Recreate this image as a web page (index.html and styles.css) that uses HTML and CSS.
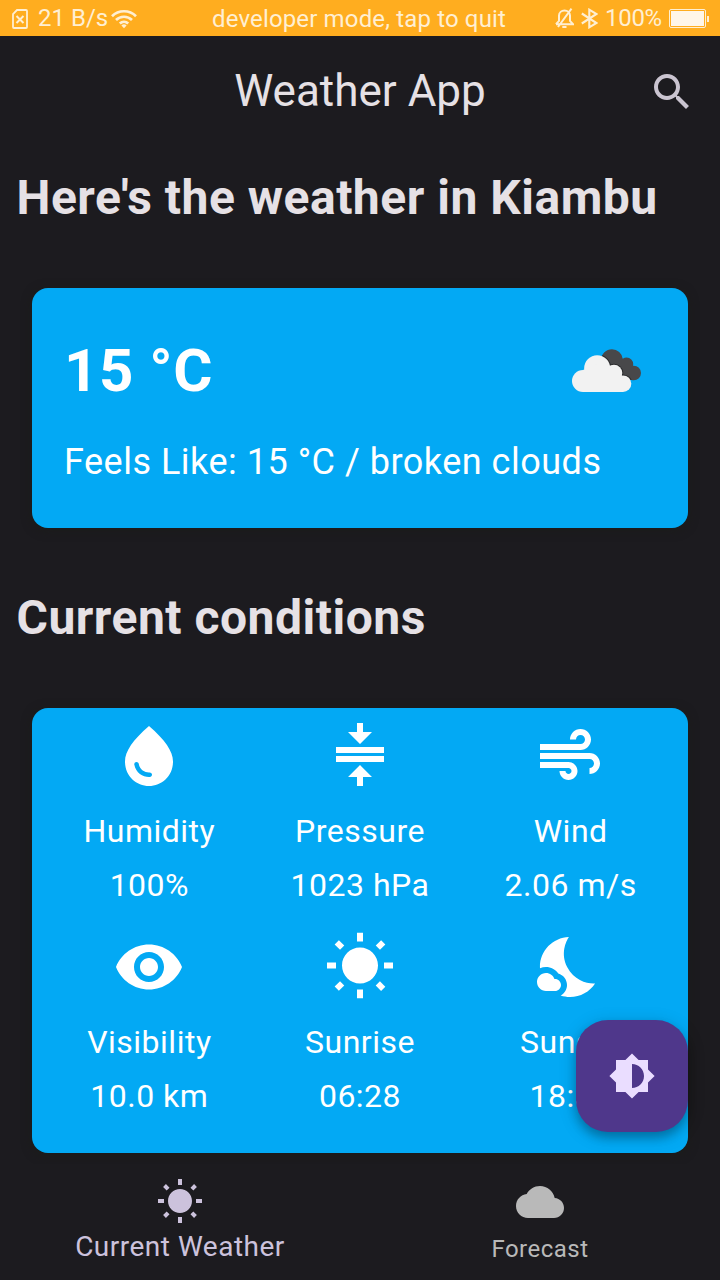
FILE: index.html
```html
<!DOCTYPE html>
<html lang="en">
<head>
<meta charset="utf-8">
<title>Weather App</title>
<link rel="stylesheet" href="styles.css">
</head>
<body>
<div class="app">
  <div class="status">
    <div class="status-left">
      <svg class="ic-sim" width="16" height="20" viewBox="0 0 16 20" fill="none" stroke="currentColor"><path stroke-width="1.8" d="M5 1H14Q15 1 15 2V18Q15 19 14 19H2Q1 19 1 18V5Z"/><path stroke-width="2" d="M4.5 7l7 7M11.5 7l-7 7"/></svg>
      <span class="rate">21 B/s</span>
      <svg class="ic-wifi" width="26" height="20" viewBox="0 0 26 20" fill="none" stroke="currentColor" stroke-width="2.7"><path d="M1 7.2a17 17 0 0 1 24 0M5 11a11.5 11.5 0 0 1 16 0M8.8 14.6a6.2 6.2 0 0 1 8.4 0"/><path d="M10.4 16.5a3.6 3.6 0 0 1 5.2 0L13 19.2Z" fill="currentColor" stroke="none"/></svg>
    </div>
    <div class="status-mid">developer mode, tap to quit</div>
    <div class="status-right">
      <svg class="ic-bell" width="19" height="21" viewBox="0 0 19 21" fill="none" stroke="currentColor" stroke-width="2"><path d="M1 16.2H18L15 12.8V7.5C15 4.5 12.5 2.6 9.5 2.6S4 4.5 4 7.5V12.8L1 16.2M16.5 .6L3 19"/><path d="M7.3 19H11.5" stroke-width="2"/></svg>
      <svg class="ic-bt" width="17" height="21" viewBox="0 0 17 21" fill="none" stroke="currentColor" stroke-width="2.1"><path d="M.8 5.5L15.5 15 8.3 19.3V1.7L15.5 6 .8 15.5"/></svg>
      <span class="percent">100%</span>
      <div class="battery"><div class="battery-fill"></div></div>
      <div class="battery-tip"></div>
    </div>
  </div>

  <header class="appbar">
    <h1 class="title">Weather App</h1>
    <svg class="search" viewBox="0 0 24 24"><path d="M15.5 14h-.79l-.28-.27C15.41 12.59 16 11.11 16 9.5 16 5.91 13.09 3 9.5 3S3 5.91 3 9.5 5.91 16 9.5 16c1.61 0 3.09-.59 4.23-1.57l.27.28v.79l5 4.99L20.49 19l-4.99-5zm-6 0C7.01 14 5 11.99 5 9.5S7.01 5 9.5 5 14 7.01 14 9.5 11.99 14 9.5 14z"/></svg>
  </header>

  <main class="content">
    <h2 class="heading">Here's the weather in Kiambu</h2>
    <section class="card now">
      <div class="now-row">
        <div class="temp">15 °C</div>
        <svg class="clouds" viewBox="0 0 70 44">
          <defs>
            <clipPath id="back"><circle cx="40" cy="11" r="10.8"/><circle cx="54.7" cy="15" r="6.5"/><circle cx="61.7" cy="24" r="7.3"/><path d="M40 10L54 12 62 20V31H40Z"/></clipPath>
            <g id="front"><circle cx="11" cy="32" r="11"/><circle cx="25.2" cy="19.2" r="13"/><circle cx="42" cy="24" r="8.3"/><circle cx="51" cy="34.7" r="8.3"/><path d="M11 21L25 15 42 18 51 28V43H11Z"/></g>
          </defs>
          <g clip-path="url(#back)"><rect class="cloud-dark" width="70" height="44"/><use href="#front" class="cloud-rim"/></g>
          <use href="#front" class="cloud-light"/>
        </svg>
      </div>
      <div class="feels">Feels Like: 15 °C / broken clouds</div>
    </section>

    <h2 class="heading">Current conditions</h2>
    <section class="card grid">
      <div class="cell">
        <svg class="icon" viewBox="0 0 24 24"><path d="M12,2c-5.33,4.55-8,8.48-8,11.8c0,4.98,3.8,8.2,8,8.2s8-3.22,8-8.2C20,10.48,17.33,6.55,12,2z M7.83,14c0.37,0,0.67,0.26,0.74,0.62c0.41,2.22,2.28,2.98,3.64,2.87c0.43-0.02,0.79,0.32,0.79,0.75c0,0.4-0.32,0.73-0.72,0.75c-2.13,0.13-4.62-1.09-5.19-4.12C7.01,14.42,7.37,14,7.83,14z"/></svg>
        <div class="label">Humidity</div><div class="value">100%</div>
      </div>
      <div class="cell">
        <svg class="icon" viewBox="0 0 24 24"><path d="M8,19h3v3h2v-3h3l-4-4L8,19z M16,4h-3V1h-2v3H8l4,4L16,4z M4,9v2h16V9H4z M4,12v2h16v-2H4z"/></svg>
        <div class="label">Pressure</div><div class="value">1023 hPa</div>
      </div>
      <div class="cell cell-end">
        <svg class="icon" viewBox="0 0 24 24"><path d="M14.5,17c0,1.65-1.35,3-3,3s-3-1.35-3-3h2c0,0.55,0.45,1,1,1s1-0.45,1-1s-0.45-1-1-1H2v-2h9.5C13.15,14,14.5,15.35,14.5,17z M19,6.5C19,4.57,17.43,3,15.5,3S12,4.57,12,6.5h2C14,5.67,14.67,5,15.5,5S17,5.67,17,6.5S16.33,8,15.5,8H2v2h13.5C17.43,10,19,8.43,19,6.5z M18.5,11H2v2h16.5c0.83,0,1.5,0.67,1.5,1.5S19.33,16,18.5,16v2c1.93,0,3.5-1.57,3.5-3.5S20.43,11,18.5,11z"/></svg>
        <div class="label">Wind</div><div class="value">2.06 m/s</div>
      </div>
      <div class="cell">
        <svg class="icon" viewBox="0 0 24 24"><path d="M12 4.5C7 4.5 2.73 7.61 1 12c1.73 4.39 6 7.5 11 7.5s9.27-3.11 11-7.5c-1.73-4.39-6-7.5-11-7.5zM12 17c-2.76 0-5-2.24-5-5s2.24-5 5-5 5 2.24 5 5-2.24 5-5 5zm0-8c-1.66 0-3 1.34-3 3s1.34 3 3 3 3-1.34 3-3-1.34-3-3-3z"/></svg>
        <div class="label">Visibility</div><div class="value">10.0 km</div>
      </div>
      <div class="cell">
        <svg class="icon" viewBox="0 0 24 24"><path id="sun" d="M6.76 4.84l-1.8-1.79-1.41 1.41 1.79 1.79 1.42-1.41zM4 10.5H1v2h3v-2zm9-9.95h-2V3.5h2V.55zm7.45 3.91l-1.41-1.41-1.79 1.79 1.41 1.41 1.79-1.79zm-3.21 13.7l1.79 1.8 1.41-1.41-1.8-1.79-1.4 1.4zM20 10.5v2h3v-2h-3zm-8-5c-3.31 0-6 2.69-6 6s2.69 6 6 6 6-2.69 6-6-2.69-6-6-6zm-1 16.95h2V19.5h-2v2.95zm-7.45-3.91l1.41 1.41 1.79-1.8-1.41-1.41-1.79 1.8z"/></svg>
        <div class="label">Sunrise</div><div class="value">06:28</div>
      </div>
      <div class="cell cell-end">
        <svg class="icon" viewBox="0 0 24 24"><path d="M11.1,12.08C8.77,7.57,10.6,3.6,11.63,2.01C6.27,2.2,1.98,6.59,1.98,12c0,0.14,0.02,0.28,0.02,0.42C2.62,12.15,3.29,12,4,12c1.66,0,3.18,0.83,4.1,2.15C9.77,14.63,11,16.17,11,18c0,1.52-0.87,2.83-2.12,3.51c0.98,0.32,2.03,0.5,3.11,0.5c3.5,0,6.58-1.8,8.37-4.52C18,17.72,13.38,16.52,11.1,12.08z M7,16l-0.18,0C6.4,14.84,5.3,14,4,14c-1.66,0-3,1.34-3,3s1.34,3,3,3c0.62,0,2.49,0,3,0c1.1,0,2-0.9,2-2C9,16.9,8.1,16,7,16z"/></svg>
        <div class="label">Sunset</div><div class="value">18:37</div>
      </div>
    </section>
    <button class="fab" aria-label="Toggle theme"><svg class="fab-icon" viewBox="0 0 24 24"><path d="M20 15.31L23.31 12 20 8.69V4h-4.69L12 .69 8.69 4H4v4.69L.69 12 4 15.31V20h4.69L12 23.31 15.31 20H20v-4.69zM12 18V6c3.31 0 6 2.69 6 6s-2.69 6-6 6z"/></svg></button>
  </main>

  <nav class="nav">
    <div class="tab tab-active"><svg class="tab-icon" viewBox="0 0 24 24"><use href="#sun"/></svg><span class="tab-label">Current Weather</span></div>
    <div class="tab"><svg class="tab-icon" viewBox="0 0 24 24"><path d="M19.35 10.04C18.67 6.59 15.64 4 12 4 9.11 4 6.6 5.64 5.35 8.04 2.34 8.36 0 10.91 0 14c0 3.31 2.69 6 6 6h13c2.76 0 5-2.24 5-5 0-2.64-2.05-4.78-4.65-4.96z"/></svg><span class="tab-label">Forecast</span></div>
  </nav>
</div>
</body>
</html>
```
FILE: styles.css
```css
* { box-sizing: border-box; }
body { margin: 0; background: #1c1b1f; font-family: Roboto, sans-serif; }
svg { display: block; flex: none; fill: currentColor; }
svg[fill="none"] { fill: none; }
.app { width: 720px; height: 1280px; display: flex; flex-direction: column; overflow: hidden; color: #e6e1e5; }

.status { height: 36px; display: grid; grid-template-columns: 212px 294px 214px; background: #ffad1f; color: #ffefd2; font-size: 24px; line-height: 36px; white-space: nowrap; }
.status-left { display: flex; align-items: center; padding-left: 12px; }
.rate { margin-left: 10px; padding-bottom: 2px; line-height: 34px; }
.ic-wifi { margin-left: 3px; }
.status-mid { text-align: center; padding-top: 1px; letter-spacing: .15px; }
.status-right { display: flex; align-items: center; padding-left: 49px; }
.ic-bt { margin-left: 7px; }
.percent { margin-left: 7px; padding-bottom: 2px; line-height: 34px; letter-spacing: -.3px; }
.battery { width: 37px; height: 19px; margin-left: 7px; padding: 1px; border: 1px solid #ffefd2; border-radius: 2px; }
.battery-fill { height: 100%; background: #fff6e8; }
.battery-tip { width: 2px; height: 6px; margin-left: 1px; background: #ffefd2; }

.appbar { height: 112px; display: grid; grid-template-columns: 1fr auto 1fr; align-items: center; padding: 0 24px; }
.title { grid-column: 2; margin: 0; font-size: 44px; font-weight: 400; line-height: 56px; padding-bottom: 2px; }
.search { grid-column: 3; justify-self: end; width: 48px; height: 48px; color: #cac4d0; }

.content { height: 1016px; position: relative; overflow: hidden; padding: 0 16px; }
.heading { margin: 0; height: 140px; padding: 21px 0 0 .5px; font-size: 48px; line-height: 58px; font-weight: 700; letter-spacing: .5px; white-space: nowrap; }
.card { margin: 0 16px; border-radius: 16px; background: #03a9f4; color: #fff; box-shadow: 0 2px 10px 1px rgba(26, 28, 24, .6); }
.now { height: 240px; margin-bottom: 40px; padding: 33px 32px 32px; }
.now-row { height: 100px; display: flex; justify-content: space-between; align-items: center; }
.temp { font-size: 60px; line-height: 72px; font-weight: 700; letter-spacing: .5px; }
.clouds { width: 70px; height: 44px; margin-right: 14px; }
.cloud-dark { fill: #48484a; }
.cloud-rim { fill: #292a2c; stroke: #292a2c; stroke-width: 2px; }
.cloud-light { fill: #f2f2f2; }
.feels { font-size: 36px; line-height: 44px; padding-top: 19px; letter-spacing: .5px; white-space: nowrap; }

.grid { height: 445px; display: grid; grid-template-columns: repeat(3, 1fr); grid-auto-rows: 211px; padding: 12px 12px 0; }
.cell { display: flex; flex-direction: column; align-items: center; }
.icon { width: 72px; height: 72px; }
.cell-end .icon { margin-right: 1px; }
.label, .value { font-size: 32px; line-height: 38px; letter-spacing: .5px; }
.label { margin-top: 20px; }
.value { margin-top: 16px; }

.fab { position: absolute; right: 32px; bottom: 32px; width: 112px; height: 112px; display: flex; align-items: center; justify-content: center; padding: 0; border: 0; border-radius: 32px; background: #4f378b; color: #eaddff; box-shadow: 0 6px 10px rgba(0, 0, 0, .22), 0 4px 18px rgba(0, 0, 0, .18); }
.fab-icon { width: 48px; height: 48px; }

.nav { height: 116px; display: grid; grid-template-columns: 1fr 1fr; }
.tab { display: flex; flex-direction: column; align-items: center; padding-top: 14px; color: #b9b9b9; font-size: 24px; letter-spacing: .5px; }
.tab-active { color: #ccc2dc; font-size: 28px; }
.tab-icon { width: 48px; height: 48px; }
.tab-label { line-height: 40px; padding-top: 3px; }
.tab-active .tab-label { padding-top: 1px; }
```
